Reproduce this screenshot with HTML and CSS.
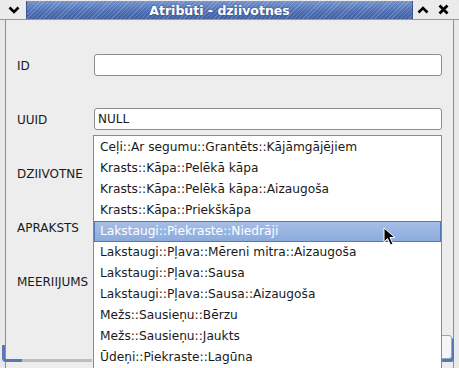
FILE: index.html
```html
<!DOCTYPE html>
<html lang="lv">
<head>
    <meta charset="utf-8">
    <title>Atribūti - dziivotnes</title>
    <link rel="stylesheet" href="styles.css">
</head>
<body>
<div class="window">
    <!-- virsraksta josla ar pogām -->
    <div class="titlebar">
        <span class="tb-btn tb-menu">
            <svg width="12" height="8" viewBox="0 0 12 8"><path d="M1.5 1.5 L6 6 L10.5 1.5" fill="none" stroke="#000" stroke-width="2.6"/></svg>
        </span>
        <div class="title">Atribūti - dziivotnes</div>
        <span class="tb-btn">
            <svg width="12" height="8" viewBox="0 0 12 8"><path d="M1.5 6.5 L6 2 L10.5 6.5" fill="none" stroke="#000" stroke-width="2.6"/></svg>
        </span>
        <span class="tb-btn">
            <svg width="11" height="11" viewBox="0 0 11 11"><path d="M1.5 1.5 L9.5 9.5 M9.5 1.5 L1.5 9.5" fill="none" stroke="#000" stroke-width="2.8"/></svg>
        </span>
    </div>

    <div class="client">
        <div class="form">
            <label>ID</label>
            <div class="field"></div>

            <label>UUID</label>
            <div class="field">NULL</div>

            <label>DZIIVOTNE</label>
            <div class="field"></div>

            <label>APRAKSTS</label>
            <div class="field"></div>

            <label>MEERIIJUMS</label>
            <div class="field"></div>
        </div>
        <div class="buttons">
            <span class="btn focus"></span>
            <span class="btn"></span>
        </div>
    </div>

    <!-- izkrītošais saraksts -->
    <ul class="popup">
        <li>Ceļi::Ar segumu::Grantēts::Kājāmgājējiem</li>
        <li>Krasts::Kāpa::Pelēkā kāpa</li>
        <li>Krasts::Kāpa::Pelēkā kāpa::Aizaugoša</li>
        <li>Krasts::Kāpa::Priekškāpa</li>
        <li class="selected">Lakstaugi::Piekraste::Niedrāji</li>
        <li>Lakstaugi::Pļava::Mēreni mitra::Aizaugoša</li>
        <li>Lakstaugi::Pļava::Sausa</li>
        <li>Lakstaugi::Pļava::Sausa::Aizaugoša</li>
        <li>Mežs::Sausieņu::Bērzu</li>
        <li>Mežs::Sausieņu::Jaukts</li>
        <li>Ūdeņi::Piekraste::Lagūna</li>
    </ul>

    <svg class="cursor" width="14" height="20" viewBox="0 0 14 20">
        <path d="M1 1 L1 15 L4.5 11.5 L7.5 18 L10 17 L7 10.5 L12 10.5 Z" fill="#000" stroke="#fff" stroke-width="1"/>
    </svg>
</div>
</body>
</html>
```

FILE: styles.css
```css
html, body {
    margin: 0;
    padding: 0;
}

body {
    font-family: "DejaVu Sans", sans-serif;
    font-size: 12px;
    color: #1a1a1a;
    background: #ececec;
}

.window {
    position: relative;
    width: 459px;
    height: 368px;
    overflow: hidden;
    background: #e9e9e9;
    display: flex;
    flex-direction: column;
}

.titlebar {
    display: flex;
    height: 19px;
    padding: 0 6px 0 0;
    border-bottom: 1px solid #9a9a9a;
    background: #ebebeb;
    border-top-left-radius: 6px;
    border-top-right-radius: 6px;
}

.tb-btn {
    width: 20px;
    display: flex;
    align-items: center;
    justify-content: center;
}

.tb-menu {
    width: 26px;
    padding-left: 2px;
    box-sizing: border-box;
}

.title {
    flex: 1;
    margin-top: 1px;
    display: flex;
    align-items: center;
    justify-content: center;
    color: #fff;
    font-weight: bold;
    font-size: 12.5px;
    text-shadow: 0 0 2px #2a4379;
    border-left: 1px solid #3a5590;
    border-right: 1px solid #3a5590;
    background:
        repeating-linear-gradient(135deg, rgba(255, 255, 255, 0.18) 0 1px, transparent 1px 3px),
        linear-gradient(#7391cc, #4a6cb1 60%, #41609f);
}

.client {
    flex: 1;
    margin: 0 5px;
    border-left: 1px solid #8e8e8e;
    border-right: 1px solid #8e8e8e;
    background: #ededed;
    position: relative;
}

.form {
    display: grid;
    grid-template-columns: 77px 1fr;
    grid-auto-rows: 54px;
    align-items: center;
    padding: 18px 11px 0 11px;
}

.form label {
    padding-top: 2px;
}

.field {
    height: 20px;
    line-height: 20px;
    padding-left: 3px;
    background: #fff;
    border: 1px solid #8d8d8d;
    border-radius: 3px;
}

.buttons {
    display: flex;
    justify-content: space-between;
    align-items: flex-start;
    padding: 27px 1px 0 0;
}

.btn {
    width: 20px;
    height: 22px;
    border: 1px solid #98a4b8;
    border-radius: 3px;
    background: #f6f6f6;
    box-shadow: 2px 3px 0 #5777b9;
}

.btn.focus {
    width: 87px;
    height: 17px;
    margin: 10px 0 0 -4px;
    border: none;
    border-left: 3px solid #5777b9;
    border-radius: 0 0 0 4px;
    box-shadow: none;
    background: linear-gradient(to right, #5777b9 17px, #bdbdbd 17px) no-repeat left bottom / 100% 3px;
}

.popup {
    position: absolute;
    left: 93px;
    top: 135px;
    width: 347px;
    margin: 0;
    padding: 1px 0;
    list-style: none;
    background: #fff;
    border: 1px solid #8a8a8a;
    font-size: 12.2px;
}

.popup li {
    height: 21px;
    line-height: 21px;
    padding-left: 6px;
    white-space: nowrap;
}

.popup li.selected {
    color: #fff;
    padding-left: 5px;
    height: 19px;
    line-height: 19px;
    border: 1px solid #5676b5;
    background: linear-gradient(#a5bee7, #8cabdd);
}

.cursor {
    position: absolute;
    left: 383px;
    top: 227px;
}
```
